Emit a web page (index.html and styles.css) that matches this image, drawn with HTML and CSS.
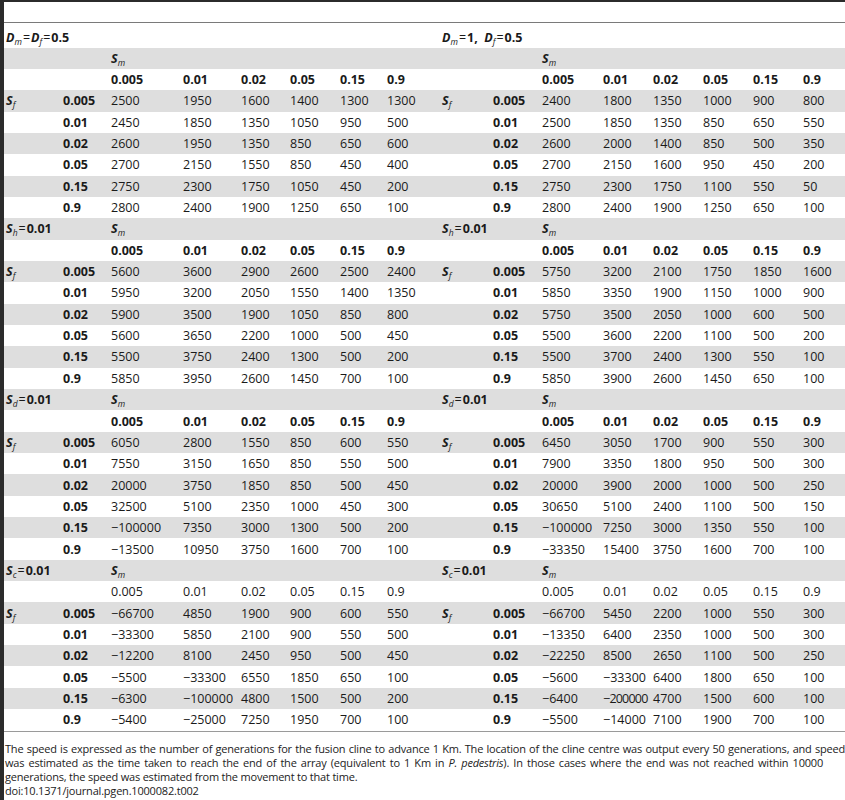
FILE: index.html
```html
<!DOCTYPE html>
<html lang="en">
<head>
    <meta charset="UTF-8">
    <meta name="viewport" content="width=device-width, initial-scale=1.0">
    <title>Table 2 - Speed of the fusion cline</title>
    <link rel="stylesheet" href="styles.css">
</head>
<body>
    <div class="page">
        <table class="speed">
            <colgroup>
                <col class="c-lab"><col class="c-row"><col class="c-d1"><col class="c-d2"><col class="c-d3"><col class="c-d4"><col class="c-d5"><col class="c-d6">
                <col class="c-lab2"><col class="c-row2"><col class="c-e1"><col class="c-e2"><col class="c-e3"><col class="c-e4"><col class="c-e5"><col class="c-e6">
            </colgroup>
            <tbody>
                <tr class="cond">
                    <td colspan="8" class="hd"><i>D</i><sub>m</sub><span class="eq">=</span><i>D</i><sub>f</sub><span class="eq">=</span>0.5</td>
                    <td colspan="8" class="hd"><i>D</i><sub>m</sub><span class="eq">=</span>1, &nbsp;<i>D</i><sub>f</sub><span class="eq">=</span>0.5</td>
                </tr>

                <!-- Dm = Df = 0.5 | Dm = 1, Df = 0.5 -->
                <tr class="shade">
                    <td></td><td></td><td class="hd"><i>S</i><sub>m</sub></td><td></td><td></td><td></td><td></td><td></td>
                    <td></td><td></td><td class="hd"><i>S</i><sub>m</sub></td><td></td><td></td><td></td><td></td><td></td>
                </tr>
                <tr>
                    <td></td><td></td><td class="hd">0.005</td><td class="hd">0.01</td><td class="hd">0.02</td><td class="hd">0.05</td><td class="hd">0.15</td><td class="hd">0.9</td>
                    <td></td><td></td><td class="hd">0.005</td><td class="hd">0.01</td><td class="hd">0.02</td><td class="hd">0.05</td><td class="hd">0.15</td><td class="hd">0.9</td>
                </tr>
                <tr class="shade">
                    <td class="hd"><i>S</i><sub>f</sub></td><td class="hd">0.005</td><td>2500</td><td>1950</td><td>1600</td><td>1400</td><td>1300</td><td>1300</td>
                    <td class="hd"><i>S</i><sub>f</sub></td><td class="hd">0.005</td><td>2400</td><td>1800</td><td>1350</td><td>1000</td><td>900</td><td>800</td>
                </tr>
                <tr>
                    <td></td><td class="hd">0.01</td><td>2450</td><td>1850</td><td>1350</td><td>1050</td><td>950</td><td>500</td>
                    <td></td><td class="hd">0.01</td><td>2500</td><td>1850</td><td>1350</td><td>850</td><td>650</td><td>550</td>
                </tr>
                <tr class="shade">
                    <td></td><td class="hd">0.02</td><td>2600</td><td>1950</td><td>1350</td><td>850</td><td>650</td><td>600</td>
                    <td></td><td class="hd">0.02</td><td>2600</td><td>2000</td><td>1400</td><td>850</td><td>500</td><td>350</td>
                </tr>
                <tr>
                    <td></td><td class="hd">0.05</td><td>2700</td><td>2150</td><td>1550</td><td>850</td><td>450</td><td>400</td>
                    <td></td><td class="hd">0.05</td><td>2700</td><td>2150</td><td>1600</td><td>950</td><td>450</td><td>200</td>
                </tr>
                <tr class="shade">
                    <td></td><td class="hd">0.15</td><td>2750</td><td>2300</td><td>1750</td><td>1050</td><td>450</td><td>200</td>
                    <td></td><td class="hd">0.15</td><td>2750</td><td>2300</td><td>1750</td><td>1100</td><td>550</td><td>50</td>
                </tr>
                <tr>
                    <td></td><td class="hd">0.9</td><td>2800</td><td>2400</td><td>1900</td><td>1250</td><td>650</td><td>100</td>
                    <td></td><td class="hd">0.9</td><td>2800</td><td>2400</td><td>1900</td><td>1250</td><td>650</td><td>100</td>
                </tr>

                <!-- Sh = 0.01 -->
                <tr class="shade">
                    <td class="hd"><i>S</i><sub>h</sub><span class="eq">=</span>0.01</td><td></td><td class="hd"><i>S</i><sub>m</sub></td><td></td><td></td><td></td><td></td><td></td>
                    <td class="hd"><i>S</i><sub>h</sub><span class="eq">=</span>0.01</td><td></td><td class="hd"><i>S</i><sub>m</sub></td><td></td><td></td><td></td><td></td><td></td>
                </tr>
                <tr>
                    <td></td><td></td><td class="hd">0.005</td><td class="hd">0.01</td><td class="hd">0.02</td><td class="hd">0.05</td><td class="hd">0.15</td><td class="hd">0.9</td>
                    <td></td><td></td><td class="hd">0.005</td><td class="hd">0.01</td><td class="hd">0.02</td><td class="hd">0.05</td><td class="hd">0.15</td><td class="hd">0.9</td>
                </tr>
                <tr class="shade">
                    <td class="hd"><i>S</i><sub>f</sub></td><td class="hd">0.005</td><td>5600</td><td>3600</td><td>2900</td><td>2600</td><td>2500</td><td>2400</td>
                    <td class="hd"><i>S</i><sub>f</sub></td><td class="hd">0.005</td><td>5750</td><td>3200</td><td>2100</td><td>1750</td><td>1850</td><td>1600</td>
                </tr>
                <tr>
                    <td></td><td class="hd">0.01</td><td>5950</td><td>3200</td><td>2050</td><td>1550</td><td>1400</td><td>1350</td>
                    <td></td><td class="hd">0.01</td><td>5850</td><td>3350</td><td>1900</td><td>1150</td><td>1000</td><td>900</td>
                </tr>
                <tr class="shade">
                    <td></td><td class="hd">0.02</td><td>5900</td><td>3500</td><td>1900</td><td>1050</td><td>850</td><td>800</td>
                    <td></td><td class="hd">0.02</td><td>5750</td><td>3500</td><td>2050</td><td>1000</td><td>600</td><td>500</td>
                </tr>
                <tr>
                    <td></td><td class="hd">0.05</td><td>5600</td><td>3650</td><td>2200</td><td>1000</td><td>500</td><td>450</td>
                    <td></td><td class="hd">0.05</td><td>5500</td><td>3600</td><td>2200</td><td>1100</td><td>500</td><td>200</td>
                </tr>
                <tr class="shade">
                    <td></td><td class="hd">0.15</td><td>5500</td><td>3750</td><td>2400</td><td>1300</td><td>500</td><td>200</td>
                    <td></td><td class="hd">0.15</td><td>5500</td><td>3700</td><td>2400</td><td>1300</td><td>550</td><td>100</td>
                </tr>
                <tr>
                    <td></td><td class="hd">0.9</td><td>5850</td><td>3950</td><td>2600</td><td>1450</td><td>700</td><td>100</td>
                    <td></td><td class="hd">0.9</td><td>5850</td><td>3900</td><td>2600</td><td>1450</td><td>650</td><td>100</td>
                </tr>

                <!-- Sd = 0.01 -->
                <tr class="shade">
                    <td class="hd"><i>S</i><sub>d</sub><span class="eq">=</span>0.01</td><td></td><td class="hd"><i>S</i><sub>m</sub></td><td></td><td></td><td></td><td></td><td></td>
                    <td class="hd"><i>S</i><sub>d</sub><span class="eq">=</span>0.01</td><td></td><td class="hd"><i>S</i><sub>m</sub></td><td></td><td></td><td></td><td></td><td></td>
                </tr>
                <tr>
                    <td></td><td></td><td class="hd">0.005</td><td class="hd">0.01</td><td class="hd">0.02</td><td class="hd">0.05</td><td class="hd">0.15</td><td class="hd">0.9</td>
                    <td></td><td></td><td class="hd">0.005</td><td class="hd">0.01</td><td class="hd">0.02</td><td class="hd">0.05</td><td class="hd">0.15</td><td class="hd">0.9</td>
                </tr>
                <tr class="shade">
                    <td class="hd"><i>S</i><sub>f</sub></td><td class="hd">0.005</td><td>6050</td><td>2800</td><td>1550</td><td>850</td><td>600</td><td>550</td>
                    <td class="hd"><i>S</i><sub>f</sub></td><td class="hd">0.005</td><td>6450</td><td>3050</td><td>1700</td><td>900</td><td>550</td><td>300</td>
                </tr>
                <tr>
                    <td></td><td class="hd">0.01</td><td>7550</td><td>3150</td><td>1650</td><td>850</td><td>550</td><td>500</td>
                    <td></td><td class="hd">0.01</td><td>7900</td><td>3350</td><td>1800</td><td>950</td><td>500</td><td>300</td>
                </tr>
                <tr class="shade">
                    <td></td><td class="hd">0.02</td><td>20000</td><td>3750</td><td>1850</td><td>850</td><td>500</td><td>450</td>
                    <td></td><td class="hd">0.02</td><td>20000</td><td>3900</td><td>2000</td><td>1000</td><td>500</td><td>250</td>
                </tr>
                <tr>
                    <td></td><td class="hd">0.05</td><td>32500</td><td>5100</td><td>2350</td><td>1000</td><td>450</td><td>300</td>
                    <td></td><td class="hd">0.05</td><td>30650</td><td>5100</td><td>2400</td><td>1100</td><td>500</td><td>150</td>
                </tr>
                <tr class="shade">
                    <td></td><td class="hd">0.15</td><td>&minus;100000</td><td>7350</td><td>3000</td><td>1300</td><td>500</td><td>200</td>
                    <td></td><td class="hd">0.15</td><td>&minus;100000</td><td>7250</td><td>3000</td><td>1350</td><td>550</td><td>100</td>
                </tr>
                <tr>
                    <td></td><td class="hd">0.9</td><td>&minus;13500</td><td>10950</td><td>3750</td><td>1600</td><td>700</td><td>100</td>
                    <td></td><td class="hd">0.9</td><td>&minus;33350</td><td>15400</td><td>3750</td><td>1600</td><td>700</td><td>100</td>
                </tr>

                <!-- Sc = 0.01 -->
                <tr class="shade">
                    <td class="hd"><i>S</i><sub>c</sub><span class="eq">=</span>0.01</td><td></td><td class="hd"><i>S</i><sub>m</sub></td><td></td><td></td><td></td><td></td><td></td>
                    <td class="hd"><i>S</i><sub>c</sub><span class="eq">=</span>0.01</td><td></td><td class="hd"><i>S</i><sub>m</sub></td><td></td><td></td><td></td><td></td><td></td>
                </tr>
                <tr>
                    <td></td><td></td><td>0.005</td><td>0.01</td><td>0.02</td><td>0.05</td><td>0.15</td><td>0.9</td>
                    <td></td><td></td><td>0.005</td><td>0.01</td><td>0.02</td><td>0.05</td><td>0.15</td><td>0.9</td>
                </tr>
                <tr class="shade">
                    <td class="hd"><i>S</i><sub>f</sub></td><td class="hd">0.005</td><td>&minus;66700</td><td>4850</td><td>1900</td><td>900</td><td>600</td><td>550</td>
                    <td class="hd"><i>S</i><sub>f</sub></td><td class="hd">0.005</td><td>&minus;66700</td><td>5450</td><td>2200</td><td>1000</td><td>550</td><td>300</td>
                </tr>
                <tr>
                    <td></td><td class="hd">0.01</td><td>&minus;33300</td><td>5850</td><td>2100</td><td>900</td><td>550</td><td>500</td>
                    <td></td><td class="hd">0.01</td><td>&minus;13350</td><td>6400</td><td>2350</td><td>1000</td><td>500</td><td>300</td>
                </tr>
                <tr class="shade">
                    <td></td><td class="hd">0.02</td><td>&minus;12200</td><td>8100</td><td>2450</td><td>950</td><td>500</td><td>450</td>
                    <td></td><td class="hd">0.02</td><td>&minus;22250</td><td>8500</td><td>2650</td><td>1100</td><td>500</td><td>250</td>
                </tr>
                <tr>
                    <td></td><td class="hd">0.05</td><td>&minus;5500</td><td>&minus;33300</td><td>6550</td><td>1850</td><td>650</td><td>100</td>
                    <td></td><td class="hd">0.05</td><td>&minus;5600</td><td>&minus;33300</td><td>6400</td><td>1800</td><td>650</td><td>100</td>
                </tr>
                <tr class="shade">
                    <td></td><td class="hd">0.15</td><td>&minus;6300</td><td>&minus;100000</td><td>4800</td><td>1500</td><td>500</td><td>200</td>
                    <td></td><td class="hd">0.15</td><td>&minus;6400</td><td class="tight">&minus;200000</td><td>4700</td><td>1500</td><td>600</td><td>100</td>
                </tr>
                <tr>
                    <td></td><td class="hd">0.9</td><td>&minus;5400</td><td>&minus;25000</td><td>7250</td><td>1950</td><td>700</td><td>100</td>
                    <td></td><td class="hd">0.9</td><td>&minus;5500</td><td>&minus;14000</td><td>7100</td><td>1900</td><td>700</td><td>100</td>
                </tr>
            </tbody>
        </table>

        <div class="notes">
            <span class="line full">The speed is expressed as the number of generations for the fusion cline to advance 1 Km. The location of the cline centre was output every 50 generations, and speed</span>
            <span class="line full short">was estimated as the time taken to reach the end of the array (equivalent to 1 Km in <i>P. pedestris</i>). In those cases where the end was not reached within 10000</span>
            <span class="line">generations, the speed was estimated from the movement to that time.</span>
            <span class="line">doi:10.1371/journal.pgen.1000082.t002</span>
        </div>
    </div>
</body>
</html>
```

FILE: styles.css
```css
body {
    margin: 0;
    font-family: "Open Sans", "Noto Sans", sans-serif;
    color: #1a1a1a;
    background-color: white;
}
.page {
    min-height: 798px;
    border-left: 4px solid #2b2b2b;
    border-top: 2px solid #2b2b2b;
    padding-top: 20px;
}
.speed {
    width: 841px;
    table-layout: fixed;
    border-collapse: collapse;
    border-top: 1px solid #7a7a7a;
    border-bottom: 1px solid #9a9a9a;
    font-size: 12.5px;
}
.c-lab { width: 57px; }
.c-row { width: 48px; }
.c-d1 { width: 72px; }
.c-d2 { width: 58px; }
.c-d3 { width: 49px; }
.c-d4 { width: 50px; }
.c-d5 { width: 47px; }
.c-d6 { width: 55px; }
.c-lab2 { width: 51px; }
.c-row2 { width: 49px; }
.c-e1 { width: 61px; }
.c-e2, .c-e3, .c-e4, .c-e5 { width: 50px; }
.c-e6 { width: 44px; }
.speed td {
    height: 21.35px;
    padding: 0 0 0 2px;
    line-height: 17px;
    white-space: nowrap;
    vertical-align: middle;
}
.speed td.tight {
    letter-spacing: -0.8px;
}
.speed tr.cond td {
    height: 25px;
    padding-top: 4px;
    box-sizing: border-box;
}
.speed tr.shade {
    background-color: #dedede;
}
.hd {
    font-weight: bold;
}
.hd i {
    font-weight: bold;
}
sub {
    font-size: 8.5px;
    line-height: 0;
    vertical-align: -3px;
    font-style: italic;
    font-weight: normal;
}
.eq {
    padding: 0 1px;
    font-weight: normal;
}
.notes {
    padding: 10px 0 0 1px;
    font-size: 11px;
    letter-spacing: -0.2px;
    line-height: 14.3px;
    color: #222;
}
.notes .line {
    display: block;
    white-space: nowrap;
}
.notes .full {
    text-align: justify;
    text-align-last: justify;
    white-space: normal;
}
.notes .short {
    margin-right: 22px;
}
```
